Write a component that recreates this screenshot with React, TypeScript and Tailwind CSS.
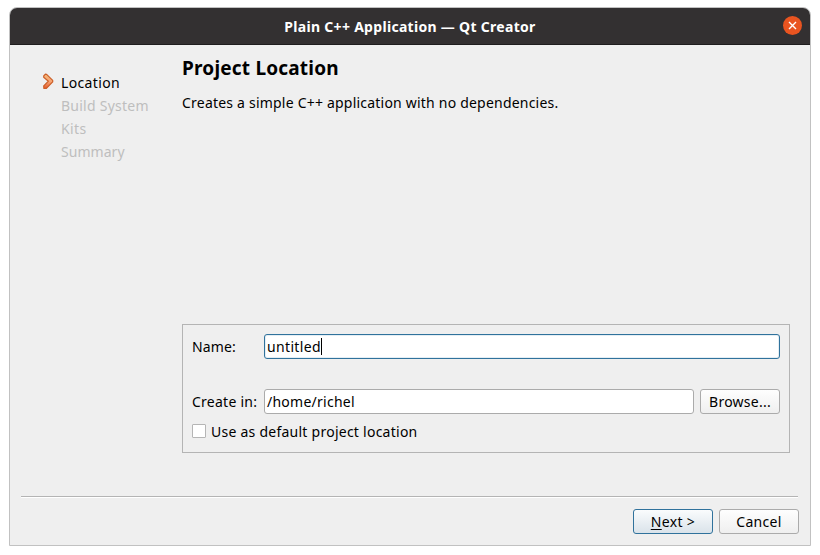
import React from "react";

const steps = [
  { label: "Build System", spacing: "tracking-[0.25px]" },
  { label: "Kits", spacing: "tracking-[0.4px]" },
  { label: "Summary", spacing: "tracking-[0.05px]" },
];

function CurrentStepArrow() {
  return (
    <svg width="12" height="17" viewBox="0 0 12 17" className="mt-[2px] ml-[1px] shrink-0">
      <defs>
        <linearGradient id="arrow" x1="0" y1="0" x2="0" y2="1">
          <stop offset="0" stopColor="#f4b878" />
          <stop offset="0.5" stopColor="#f6a676" />
          <stop offset="1" stopColor="#e4582c" />
        </linearGradient>
      </defs>
      <path
        d="M0.7 3 L2.4 1.2 L3.6 1.3 L9.7 7.4 L9.7 8.8 L3.4 15.4 L0.9 15.4 L0.7 13 L5.4 8.2 L0.7 4.3 Z"
        fill="url(#arrow)"
        stroke="#cc5f28"
        strokeWidth="1.2"
        strokeLinejoin="round"
      />
    </svg>
  );
}

export default function App() {
  return (
    <div className="h-[555px] w-[820px] bg-white pt-[7px] pl-[9px] font-['Noto_Sans',sans-serif] text-[14px] leading-[23px] tracking-[0.25px] text-black">
      <div className="flex h-[539px] w-[802px] flex-col overflow-hidden rounded-t-[8px] border border-[#c1c1c1] bg-[#efefef]">
        <header className="flex h-[37px] shrink-0 items-center border-b border-[#1f1d1e] bg-[#333031]">
          <div className="w-[27px]" />
          <h1 className="flex-1 text-center text-[14px] font-bold tracking-[0.3px] whitespace-nowrap text-white">
            Plain C++ Application — Qt Creator
          </h1>
          <button className="mr-[8px] mb-[1px] flex size-[19px] items-center justify-center rounded-full bg-[#e95420]">
            <svg width="9" height="9" viewBox="0 0 9 9">
              <path d="M1 1 L8 8 M8 1 L1 8" stroke="white" strokeWidth="1.4" />
            </svg>
          </button>
        </header>

        <div className="flex h-[451px] shrink-0 pr-[20px]">
          <nav className="flex w-[172px] shrink-0 flex-col pt-[26px] pl-[32px] whitespace-nowrap">
            <div className="flex h-[23px]">
              <CurrentStepArrow />
              <span className="ml-[6px] tracking-[0.35px]">Location</span>
            </div>
            {steps.map((step) => (
              <span key={step.label} className={`h-[23px] pl-[19px] text-[#bebebe] ${step.spacing}`}>
                {step.label}
              </span>
            ))}
          </nav>

          <main className="flex-1">
            <h2 className="mt-[9px] h-[28px] text-[19px] leading-[28px] font-bold tracking-[0.2px] whitespace-nowrap">Project Location</h2>
            <p className="mt-[9px] h-[23px] tracking-[0.21px] whitespace-nowrap">Creates a simple C++ application with no dependencies.</p>

            <section className="mt-[210px] h-[129px] border border-[#b4b4b4] px-[9px] pt-[9px]">
              <div className="flex h-[25px] items-center">
                <span className="w-[72px] tracking-[0.1px]">Name:</span>
                <div className="flex h-[25px] flex-1 items-center rounded-[3px] border border-[#30729c] bg-white pl-[2px] shadow-[inset_0_0_0_1px_#e4eef4]">
                  <span className="tracking-[0.35px]">untitled</span>
                  <span className="h-[17px] w-px bg-black" />
                </div>
              </div>
              <div className="mt-[30px] flex h-[25px] items-center">
                <span className="w-[72px] whitespace-nowrap">Create in:</span>
                <div className="flex h-[25px] w-[430px] items-center rounded-[3px] border border-[#ababab] bg-white pl-[2px]">
                  <span>/home/richel</span>
                </div>
                <button className="ml-[6px] h-[25px] w-[80px] rounded-[3px] border border-[#ababab] bg-linear-to-b from-[#fefefe] to-[#efefef] leading-[23px] tracking-[0.25px]">
                  Browse...
                </button>
              </div>
              <label className="mt-[6px] flex h-[23px] items-start">
                <span className="mt-[4px] mr-[5px] size-[14px] rounded-[1px] border border-[#b5b5b5] bg-white" />
                <span className="tracking-[0.25px]">Use as default project location</span>
              </label>
            </section>
          </main>
        </div>

        <div className="mr-[12px] ml-[11px] h-[2px] shrink-0 border-t border-[#b4b4b4] bg-white" />
        <footer className="mt-[11px] flex h-[25px] shrink-0 justify-end gap-[6px] pr-[11px]">
          <button className="h-[25px] w-[80px] rounded-[3px] border border-[#30729c] bg-linear-to-b from-[#fafcfd] to-[#dae3ea] leading-[23px] tracking-[0.35px]">
            <span className="underline decoration-1 underline-offset-[2px]">N</span>ext &gt;
          </button>
          <button className="h-[25px] w-[80px] rounded-[3px] border border-[#ababab] bg-linear-to-b from-[#fefefe] to-[#efefef] leading-[23px] tracking-[0.3px]">
            Cancel
          </button>
        </footer>
      </div>
    </div>
  );
}
